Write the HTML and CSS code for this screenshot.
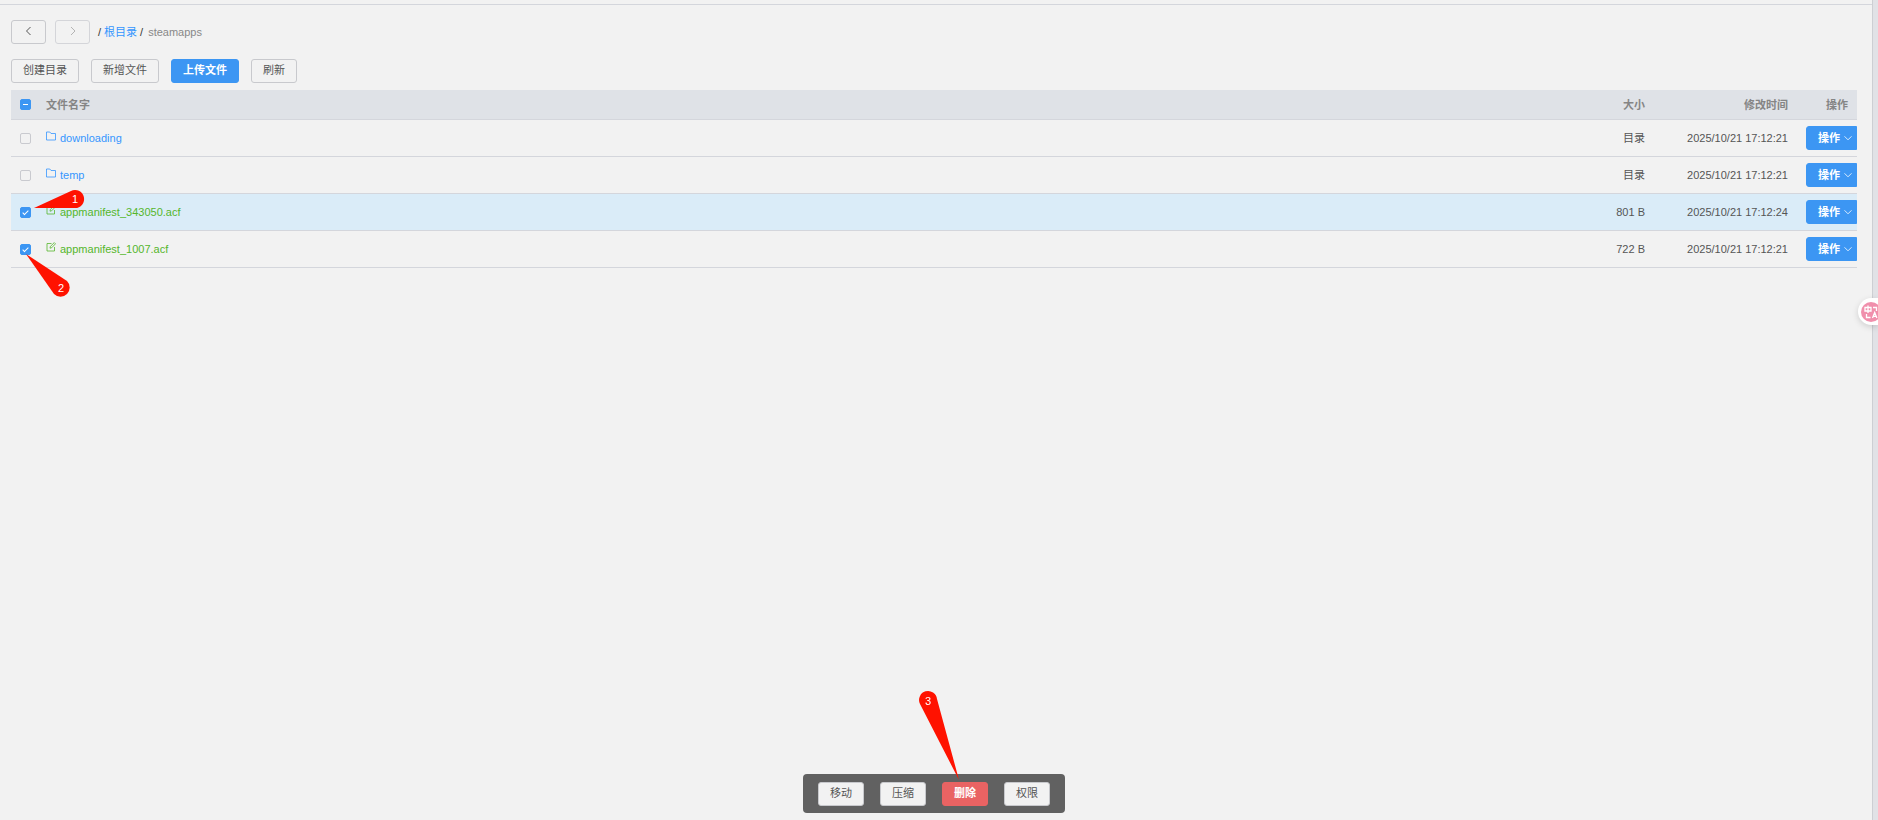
FILE: index.html
```
<!DOCTYPE html>
<html lang="zh-CN">
<head>
	<meta charset="UTF-8">
	<title>文件管理</title>
	<link rel="stylesheet" href="styles.css">
</head>
<body>

	<svg class="sprite" aria-hidden="true">
		<symbol id="folder" viewBox="0 0 10 10">
			<path d="M.5 1h3.300l1.200 1.500h4.500v6.500h-9z" fill="none" stroke="currentColor" stroke-width=".8"/>
		</symbol>
		<symbol id="edit" viewBox="0 0 10 10">
			<path d="M5.500 1.500H1v7.500h7.500V5M4 6.200l.3-1.700L8.300.6l1.200 1.200-3.900 4z" fill="none" stroke="currentColor" stroke-width=".8"/>
		</symbol>
		<symbol id="down" viewBox="0 0 10 10">
			<path d="M1.500 3.300L5 6.800l3.500-3.500" fill="none" stroke="currentColor" stroke-width=".8"/>
		</symbol>
	</svg>

	<main class="content">
		<nav class="path">
			<button class="btn nav-btn" aria-label="后退"><svg viewBox="0 0 10 10"><path d="M6.500 1L2.500 5l4 4"/></svg></button>
			<button class="btn nav-btn" aria-label="前进" disabled><svg viewBox="0 0 10 10"><path d="M3 1l4 4-4 4"/></svg></button>
			<div class="breadcrumb">
				<span>/</span>
				<a href="#">根目录</a>
				<span>/</span>
				<span class="current">steamapps</span>
			</div>
		</nav>

		<div class="toolbar">
			<button class="btn">创建目录</button>
			<button class="btn">新增文件</button>
			<button class="btn primary">上传文件</button>
			<button class="btn">刷新</button>
		</div>

		<table class="files">
			<thead>
				<tr>
					<th class="col-check"><input type="checkbox" class="check partial" aria-label="全选"></th>
					<th>文件名字</th>
					<th class="col-size">大小</th>
					<th class="col-time">修改时间</th>
					<th class="col-action">操作</th>
				</tr>
			</thead>
			<tbody>
				<tr>
					<td class="col-check"><input type="checkbox" class="check" aria-label="downloading"></td>
					<td><a class="name dir" href="#"><svg><use href="#folder"/></svg>downloading</a></td>
					<td class="col-size">目录</td>
					<td class="col-time">2025/10/21 17:12:21</td>
					<td class="col-action"><button class="btn primary action">操作<svg><use href="#down"/></svg></button></td>
				</tr>
				<tr>
					<td class="col-check"><input type="checkbox" class="check" aria-label="temp"></td>
					<td><a class="name dir" href="#"><svg><use href="#folder"/></svg>temp</a></td>
					<td class="col-size">目录</td>
					<td class="col-time">2025/10/21 17:12:21</td>
					<td class="col-action"><button class="btn primary action">操作<svg><use href="#down"/></svg></button></td>
				</tr>
				<tr class="hover">
					<td class="col-check"><input type="checkbox" class="check" aria-label="appmanifest_343050.acf" checked></td>
					<td><a class="name file" href="#"><svg><use href="#edit"/></svg>appmanifest_343050.acf</a></td>
					<td class="col-size">801 B</td>
					<td class="col-time">2025/10/21 17:12:24</td>
					<td class="col-action"><button class="btn primary action">操作<svg><use href="#down"/></svg></button></td>
				</tr>
				<tr>
					<td class="col-check"><input type="checkbox" class="check" aria-label="appmanifest_1007.acf" checked></td>
					<td><a class="name file" href="#"><svg><use href="#edit"/></svg>appmanifest_1007.acf</a></td>
					<td class="col-size">722 B</td>
					<td class="col-time">2025/10/21 17:12:21</td>
					<td class="col-action"><button class="btn primary action">操作<svg><use href="#down"/></svg></button></td>
				</tr>
			</tbody>
		</table>

		<div class="batch">
			<button class="btn">移动</button>
			<button class="btn">压缩</button>
			<button class="btn danger">删除</button>
			<button class="btn">权限</button>
		</div>
	</main>

	<aside class="side"></aside>

	<button class="translate" aria-label="翻译">
		<svg viewBox="0 0 20 20">
			<circle cx="10" cy="10" r="10" fill="#f08fac"/>
			<path d="M4 5.500h6v3.500H4zM7 3.500v7.500M12 5.500h3.500v3.500M5.500 12v3.500h4M11.500 16l2.200-5.500 2.200 5.500M12.300 14.300h2.800" fill="none" stroke="#fff" stroke-width="1.300"/>
		</svg>
	</button>

	<!-- step markers -->
	<svg class="marker step-1" viewBox="0 0 50 19">
		<path d="M0 18L37 1a9 9 0 1 1 4 17z"/>
		<text x="41" y="13">1</text>
	</svg>
	<svg class="marker step-2" viewBox="0 0 45 44">
		<path d="M0 0L41 27a9 9 0 1 1-13 13z"/>
		<text x="35" y="38">2</text>
	</svg>
	<svg class="marker step-3" viewBox="0 0 41 88">
		<path d="M40 88L1 12a9 9 0 1 1 17-5z"/>
		<text x="9" y="13">3</text>
	</svg>

</body>
</html>
```

FILE: styles.css
```
:root {
	--bg: #f2f2f2;
	--blue: #3c96f3;
	--link: #3596ff;
	--green: #55b62c;
	--red: #e96363;
	--text: #555;
	--muted: #888;
	--line: #d4d6dc;
}

* {
	box-sizing: border-box;
}

body {
	display: flex;
	min-height: 100vh;
	margin: 0;
	background: var(--bg);
	color: var(--text);
	font-family: "Liberation Sans", "Noto Sans CJK SC", sans-serif;
	font-size: 11px;
	line-height: 16px;
}

a {
	color: var(--link);
	text-decoration: none;
}

.sprite {
	position: absolute;
	width: 0;
	height: 0;
}

.content {
	flex: 1;
	margin-top: 4px;
	padding: 15px 15px 0 11px;
	border-top: 1px solid var(--line);
}

.side {
	width: 6px;
	border-left: 1px solid #cdcfd3;
	background: #e1e2e6;
}

.btn {
	height: 24px;
	padding: 0 11px 2px;
	border: 1px solid #c8c9cd;
	border-radius: 3px;
	background: var(--bg);
	color: var(--text);
	font: inherit;
	cursor: pointer;
}

.btn.primary {
	border-color: var(--blue);
	background: var(--blue);
	color: #fff;
	font-weight: bold;
}

.btn.danger {
	border-color: var(--red);
	background: var(--red);
	color: #fff;
	font-weight: bold;
}

.path {
	display: flex;
	align-items: center;
	gap: 9px;
	margin-bottom: 15px;
}

.nav-btn {
	display: flex;
	align-items: center;
	justify-content: center;
	width: 35px;
	padding: 0 0 2px;
}

.nav-btn svg {
	width: 10px;
	height: 10px;
	fill: none;
	stroke: currentColor;
}

.nav-btn:disabled {
	border-color: #d4d5d9;
	color: #b4b4b4;
}

.breadcrumb {
	display: flex;
	gap: 3px;
	margin-left: -1px;
	color: #333;
}

.breadcrumb .current {
	padding-left: 2px;
	color: var(--muted);
}

.toolbar {
	display: flex;
	gap: 12px;
	margin-bottom: 7px;
}

.files {
	width: 100%;
	table-layout: fixed;
	border-collapse: separate;
	border-spacing: 0;
}

.files th,
.files td {
	height: 37px;
	padding: 0 9px;
	border-bottom: 1px solid var(--line);
	text-align: left;
	white-space: nowrap;
}

.files th {
	height: 30px;
	background: #dfe2e7;
	color: #858585;
}

.files .hover td {
	background: #daecf8;
}

.files .col-check {
	width: 26px;
	padding-right: 0;
}

.files .col-size,
.files .col-time {
	width: 143px;
	text-align: right;
}

.files .col-action {
	width: 60px;
	text-align: right;
}

.files td.col-action {
	padding-right: 0;
}

.check {
	display: block;
	width: 11px;
	height: 11px;
	margin: 0;
	border: 1px solid #c9cacf;
	border-radius: 2px;
	appearance: none;
	position: relative;
}

.check:checked,
.check.partial {
	border-color: var(--blue);
	background: var(--blue);
}

.check:checked::after {
	content: "";
	position: absolute;
	left: 3px;
	top: 1px;
	width: 3px;
	height: 6px;
	box-sizing: border-box;
	border: solid #fff;
	border-width: 0 1px 1px 0;
	transform: rotate(45deg);
}

.check.partial::after {
	content: "";
	position: absolute;
	left: 2px;
	top: 4px;
	width: 5px;
	height: 1px;
	background: #fff;
}

.name {
	display: flex;
	gap: 4px;
}

.name svg {
	width: 10px;
	height: 10px;
	margin-top: 1px;
}

.name.file {
	color: var(--green);
}

.action {
	display: flex;
	align-items: center;
	gap: 3px;
	width: 51px;
	padding: 0 3px 0 11px;
	border-radius: 3px 0 0 3px;
}

.action svg {
	flex: none;
	width: 10px;
	height: 10px;
}

/* floating bar for the selected files */
.batch {
	position: fixed;
	bottom: 7px;
	left: calc(50% - 5px);
	display: flex;
	gap: 16px;
	padding: 8px 15px 7px;
	border-radius: 4px;
	background: #616161;
	transform: translateX(-50%);
}

.translate {
	position: fixed;
	top: 298px;
	right: 0;
	display: flex;
	align-items: center;
	width: 20px;
	height: 27px;
	padding: 0 0 0 3px;
	border: 0;
	border-radius: 14px 0 0 14px;
	background: #fff;
	box-shadow: 0 2px 6px rgba(0, 0, 0, 0.15);
	overflow: hidden;
}

.translate svg {
	flex: none;
	width: 20px;
	height: 20px;
}

.marker {
	position: absolute;
	overflow: visible;
	fill: #ff1200;
	pointer-events: none;
}

.marker text {
	fill: #fff;
	text-anchor: middle;
}

.step-1 {
	left: 34px;
	top: 190px;
	width: 50px;
}

.step-2 {
	left: 26px;
	top: 254px;
	width: 45px;
}

.step-3 {
	left: 919px;
	top: 692px;
	width: 41px;
}
```
